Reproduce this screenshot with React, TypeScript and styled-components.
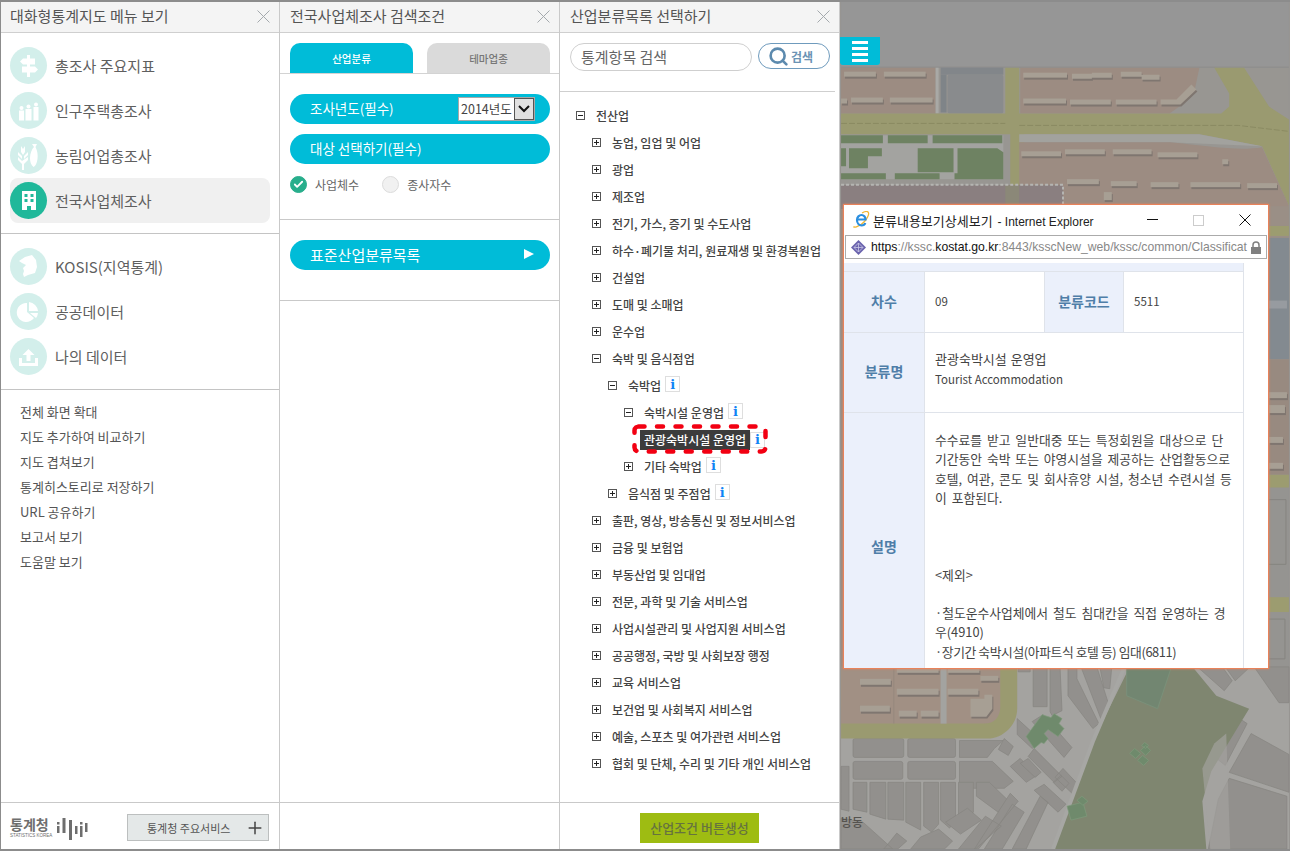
import React from 'react';
import styled, { createGlobalStyle } from 'styled-components';
import { Check, Plus, Search } from 'lucide-react';

const FONT = '"Noto Sans CJK KR", "Noto Sans", sans-serif';

const GlobalStyle = createGlobalStyle`
  html, body { margin: 0; padding: 0; background: #fff; }
  * { box-sizing: border-box; }
  body { font-family: ${FONT}; }
`;

const mainMenu = [
  { label: '총조사 주요지표', icon: 'sign' },
  { label: '인구주택총조사', icon: 'people' },
  { label: '농림어업총조사', icon: 'farm' },
  { label: '전국사업체조사', icon: 'building', active: true },
];
const dataMenu = [
  { label: 'KOSIS(지역통계)', icon: 'korea' },
  { label: '공공데이터', icon: 'pie' },
  { label: '나의 데이터', icon: 'upload' },
];
const linkMenu = ['전체 화면 확대', '지도 추가하여 비교하기', '지도 겹쳐보기', '통계히스토리로 저장하기', 'URL 공유하기', '보고서 보기', '도움말 보기'];

type TreeRow = { label: string; level: number; open?: boolean; info?: boolean; selected?: boolean; noToggle?: boolean };
const tree: TreeRow[] = [
  { label: '전산업', level: 0, open: true },
  { label: '농업, 임업 및 어업', level: 1 },
  { label: '광업', level: 1 },
  { label: '제조업', level: 1 },
  { label: '전기, 가스, 증기 및 수도사업', level: 1 },
  { label: '하수·폐기물 처리, 원료재생 및 환경복원업', level: 1 },
  { label: '건설업', level: 1 },
  { label: '도매 및 소매업', level: 1 },
  { label: '운수업', level: 1 },
  { label: '숙박 및 음식점업', level: 1, open: true },
  { label: '숙박업', level: 2, open: true, info: true },
  { label: '숙박시설 운영업', level: 3, open: true, info: true },
  { label: '관광숙박시설 운영업', level: 4, info: true, selected: true, noToggle: true },
  { label: '기타 숙박업', level: 3, info: true },
  { label: '음식점 및 주점업', level: 2, info: true },
  { label: '출판, 영상, 방송통신 및 정보서비스업', level: 1 },
  { label: '금융 및 보험업', level: 1 },
  { label: '부동산업 및 임대업', level: 1 },
  { label: '전문, 과학 및 기술 서비스업', level: 1 },
  { label: '사업시설관리 및 사업지원 서비스업', level: 1 },
  { label: '공공행정, 국방 및 사회보장 행정', level: 1 },
  { label: '교육 서비스업', level: 1 },
  { label: '보건업 및 사회복지 서비스업', level: 1 },
  { label: '예술, 스포츠 및 여가관련 서비스업', level: 1 },
  { label: '협회 및 단체, 수리 및 기타 개인 서비스업', level: 1 },
];

const MenuIcon = ({ name }: { name: string }) => {
  const c = '#fff';
  switch (name) {
    case 'sign':
      return (
        <svg width="37" height="37" viewBox="0 0 37 37" fill={c}>
          <rect x="17" y="8" width="3" height="22" />
          <path d="M13 11.500h12v6H13l-3-3z" />
          <path d="M12 19.500h13l3 3-3 3H12z" />
        </svg>
      );
    case 'people':
      return (
        <svg width="37" height="37" viewBox="0 0 37 37" fill={c}>
          <circle cx="11.500" cy="16" r="2" /><rect x="9" y="18.500" width="5" height="10" />
          <circle cx="18.500" cy="14.500" r="2" /><rect x="15.500" y="17" width="6" height="11.500" />
          <circle cx="26" cy="12.500" r="2" /><rect x="23.500" y="15" width="5" height="13.500" />
        </svg>
      );
    case 'farm':
      return (
        <svg width="37" height="37" viewBox="0 0 37 37" fill={c}>
          <path d="M11 9l2 3 2-3v6l-2 3-2-3zM8 15l4 4v3l-4-4zM18 15v3l-4 4v-3zM8 20l4 4v3l-4-4zM18 20v3l-4 4v6h-2v-9z" />
          <path d="M27 7l-1.500 3c2 4 2.500 8 2 12-.5 4-2 7-4 8-2.500-2-3.500-5-3.500-9 0-5 2-9 4-11l-2-3z" />
        </svg>
      );
    case 'building':
      return (
        <svg width="37" height="37" viewBox="0 0 37 37">
          <path fill={c} fillRule="evenodd" d="M12 9h14v19h-5v-4h-4v4h-5zM14.500 12v3h3v-3zM20.500 12v3h3v-3zM14.500 17v3h3v-3zM20.500 17v3h3v-3z" />
        </svg>
      );
    case 'korea':
      return (
        <svg width="37" height="37" viewBox="0 0 37 37">
          <path fill={c} d="M15 9l7-2 4 5 1 7-2 6-7 2-4 2-1-3 1-3-1-3 3-3-4-2-3-2 3-2z" />
        </svg>
      );
    case 'pie':
      return (
        <svg width="37" height="37" viewBox="0 0 37 37" fill={c}>
          <path d="M17 10v9l7 6a9.500 9.500 0 1 1-7-15z" />
          <path d="M19 9a10 10 0 0 1 9 9h-9z" />
          <path d="M20 20h8a10 10 0 0 1-2 5z" />
        </svg>
      );
    default:
      return (
        <svg width="37" height="37" viewBox="0 0 37 37" fill={c}>
          <path d="M18.500 11l6 6h-4v6h-4v-6h-4z" />
          <path d="M9 20h3v5h13v-5h3v8H9z" />
        </svg>
      );
  }
};

const CloseIcon = () => (
  <svg width="13" height="13" viewBox="0 0 13 13" fill="none" stroke="#a4a9ad" strokeWidth="1">
    <path d="M.5.500l12 12M12.500.500l-12 12" />
  </svg>
);

const Page = styled.div`
  position: relative;
  display: flex;
  width: 1290px;
  height: 851px;
  overflow: hidden;
  border-top: 2px solid #8c8c8c;
  border-left: 1px solid #8c8c8c;
  border-bottom: 2px solid #8c8c8c;
  background: #fff;
`;

const Header = styled.header`
  display: flex;
  flex: none;
  align-items: center;
  justify-content: space-between;
  height: 31px;
  padding: 0 9px 2px 10px;
  background: #f4f4f4;
  border-bottom: 1px solid #cfcfcf;
  color: #555;
  font-size: 15px;
  line-height: 20px;
`;

const Panel = styled.section`
  display: flex;
  flex-direction: column;
  flex: none;
  width: 280px;
  height: 100%;
  background: #fff;
  border-right: 1px solid #c9c9c9;
  &:first-child {
    width: 279px;
    ${Header} { padding-left: 9px; }
  }
`;

const Body = styled.div`
  flex: 1;
  min-height: 0;
  display: flex;
  flex-direction: column;
`;

const Footer = styled.footer`
  flex: none;
  display: flex;
  align-items: center;
  height: 47px;
  padding-top: 3px;
  border-top: 1px solid #c9c9c9;
`;

const MenuGroup = styled.nav`
  display: flex;
  flex-direction: column;
  gap: 8px;
  padding: 14px 0 14px 9px;
  border-bottom: 1px solid #c4c4c4;
`;

const MenuRow = styled.div<{ $active?: boolean }>`
  display: flex;
  align-items: center;
  gap: 8px;
  height: 37px;
  margin-right: 9px;
  color: #5f5f5f;
  font-size: 15px;
  border-radius: 8px;
  ${p => p.$active && `
    height: 45px;
    margin: -4px 9px -4px 0;
    background: #f0f0f0;
  `}
`;

const MenuCircle = styled.span<{ $active?: boolean }>`
  display: flex;
  width: 37px;
  height: 37px;
  flex: none;
  border-radius: 50%;
  background: ${p => (p.$active ? '#20b89a' : '#d3efeb')};
`;

const Links = styled.ul`
  list-style: none;
  margin: 0;
  padding: 9px 0 0 19px;
  li {
    height: 25px;
    line-height: 25px;
    font-size: 13px;
    color: #555;
  }
`;

const Logo = styled.div`
  display: flex;
  align-items: center;
  gap: 5px;
  width: 126px;
  padding-left: 9px;
`;

const LogoText = styled.div`
  display: flex;
  flex-direction: column;
  color: #6e6e6e;
  font-size: 14px;
  line-height: 15px;
  font-weight: 700;
  small {
    margin-top: 1px;
    font-size: 4.500px;
    line-height: 6px;
    font-weight: 400;
    white-space: nowrap;
    font-family: "Liberation Sans", sans-serif;
  }
`;

const ServiceButton = styled.div`
  display: flex;
  align-items: center;
  justify-content: space-between;
  width: 142px;
  height: 27px;
  padding: 0 3px 0 19px;
  background: #e4e8e8;
  border: 1px solid #bcbfbf;
  color: #555;
  font-size: 11px;
  svg { color: #444; }
`;

const Tabs = styled.div`
  display: flex;
  flex: none;
  gap: 14px;
  height: 41px;
  padding: 10px 9px 0 10px;
  border-bottom: 1px solid #d3d3d3;
`;

const Tab = styled.div<{ $active?: boolean }>`
  display: flex;
  flex: 1;
  align-items: center;
  justify-content: center;
  border-radius: 10px 10px 0 0;
  background: ${p => (p.$active ? '#00bcd8' : '#dadada')};
  color: ${p => (p.$active ? '#fff' : '#777')};
  font-size: 10.5px;
  font-weight: 500;
`;

const Section = styled.div<{ $height: number }>`
  display: flex;
  flex: none;
  flex-direction: column;
  height: ${p => p.$height}px;
  padding: 20px 9px 0 10px;
  gap: 10px;
  border-bottom: 1px solid #c9c9c9;
`;

const Pill = styled.div<{ $large?: boolean }>`
  display: flex;
  flex: none;
  align-items: center;
  justify-content: space-between;
  height: 30px;
  padding: 0 15px 2px 20px;
  border-radius: 15px;
  background: #00bcd8;
  color: #fff;
  font-size: ${p => (p.$large ? 15 : 13.5)}px;
`;

const YearSelect = styled.span`
  display: flex;
  align-items: stretch;
  justify-content: space-between;
  width: 77px;
  height: 24px;
  margin-top: 2px;
  padding-left: 2px;
  background: #fff;
  border: 1px solid #a8a8a8;
  color: #444;
  font-size: 12.5px;
  line-height: 21px;
  white-space: nowrap;
`;

const SelectArrow = styled.span`
  display: flex;
  width: 20px;
  align-items: center;
  justify-content: center;
  flex: none;
  background: #e1e1e1;
  border: 1px solid #555;
`;

const RadioRow = styled.div`
  display: flex;
  align-items: center;
  gap: 23px;
  margin-top: 2px;
`;

const Radio = styled.label`
  display: flex;
  align-items: center;
  gap: 8px;
  color: #666;
  font-size: 12px;
`;

const RadioMark = styled.span<{ $on?: boolean }>`
  display: flex;
  align-items: center;
  justify-content: center;
  width: 17px;
  height: 17px;
  border-radius: 50%;
  background: ${p => (p.$on ? '#28ae8c' : '#f1f1f1')};
  border: 1px solid ${p => (p.$on ? '#28ae8c' : '#dcdcdc')};
  color: #fff;
`;

const SearchRow = styled.div`
  display: flex;
  flex: none;
  gap: 6px;
  height: 59px;
  margin-right: 4px;
  padding: 10px 5px 0 10px;
  border-bottom: 1px solid #cfcfcf;
`;

const SearchInput = styled.div`
  width: 182px;
  height: 28px;
  padding-left: 10px;
  border: 1px solid #cfcfcf;
  border-radius: 14px;
  color: #666;
  font-size: 15px;
  line-height: 26px;
`;

const SearchButton = styled.div`
  display: flex;
  align-items: center;
  justify-content: center;
  gap: 2px;
  width: 72px;
  height: 26px;
  padding-right: 7px;
  border: 1px solid #6f9bbd;
  border-radius: 13px;
  color: #6b93b4;
  font-size: 12px;
  font-weight: 700;
`;

const Tree = styled.div`
  flex: 1;
  padding: 10px 0 0 16px;
`;

const Row = styled.div<{ $level: number }>`
  display: flex;
  align-items: center;
  height: 27px;
  padding-left: ${p => p.$level * 16}px;
  color: #444;
  font-size: 12px;
  font-weight: 500;
  white-space: nowrap;
`;

const Toggle = styled.span`
  display: flex;
  flex: none;
  align-items: center;
  justify-content: center;
  width: 9px;
  height: 9px;
  margin-right: 11px;
  border: 1px solid #555;
  background: #fff;
  position: relative;
`;

const ToggleBar = styled.i<{ $vertical?: boolean }>`
  position: absolute;
  background: #222;
  ${p => (p.$vertical ? 'width:1px;height:5px;left:3px;top:1px;' : 'width:5px;height:1px;left:1px;top:3px;')}
`;

const InfoBadge = styled.span<{ $flush?: boolean }>`
  display: flex;
  flex: none;
  align-items: center;
  justify-content: center;
  width: 15px;
  height: 16px;
  margin: ${p => (p.$flush ? '0' : '-3px 0 0 4px')};
  border: 1px solid #dedede;
  background: #fff;
  color: #0f84f5;
  font-family: "DejaVu Serif", serif;
  font-size: 13px;
  font-weight: 700;
`;

const Selected = styled.span`
  position: relative;
  display: flex;
  align-items: center;
`;

const SelectedLabel = styled.span`
  height: 20px;
  padding: 0 4px;
  line-height: 20px;
  background: #3c3c3c;
  color: #fff;
  font-weight: 500;
`;

const Dashes = styled.svg`
  position: absolute;
  left: -8px;
  top: -6px;
  pointer-events: none;
`;

const ActionButton = styled.div`
  display: flex;
  align-items: center;
  justify-content: center;
  width: 119px;
  height: 30px;
  margin: 0 auto;
  background: #9ebc12;
  color: #66733f;
  font-size: 13px;
  font-weight: 500;
`;

const MapArea = styled.div`
  position: relative;
  flex: 1;
  min-width: 0;
  height: 100%;
  background: #979592;
`;

const MapSvg = styled.svg`
  display: block;
  width: 100%;
  height: 100%;
`;

const Hamburger = styled.div`
  position: absolute;
  left: 0;
  top: 35px;
  display: flex;
  flex-direction: column;
  align-items: center;
  justify-content: center;
  gap: 3px;
  width: 40px;
  height: 28px;
  background: #00bcd8;
  border-radius: 0 0 3px 3px;
  i { display: block; width: 16px; height: 3px; background: #fff; }
`;

const Popup = styled.div`
  position: absolute;
  left: 3px;
  top: 202px;
  display: flex;
  flex-direction: column;
  width: 426px;
  height: 465px;
  background: #fff;
  border: 1px solid #e9825a;
  box-shadow: 0 0 2px #e9825a;
`;

const TitleBar = styled.div`
  display: flex;
  flex: none;
  align-items: center;
  gap: 3px;
  height: 30px;
  padding-left: 8px;
  color: #222;
  font-size: 13px;
`;

const TitleText = styled.span`
  flex: 1;
  white-space: nowrap;
  span {
    margin-left: 2px;
    font-family: "Liberation Sans", sans-serif;
    font-size: 12px;
  }
`;

const WinButtons = styled.div`
  display: flex;
  align-items: center;
  gap: 35px;
  padding-right: 17px;
`;

const AddressBar = styled.div`
  display: flex;
  flex: none;
  align-items: center;
  gap: 4px;
  height: 24px;
  margin: 0 1px;
  padding: 0 4px;
  border: 1px solid #ababab;
  font-family: "Liberation Sans", sans-serif;
  font-size: 12.2px;
  color: #888;
  white-space: nowrap;
`;

const Url = styled.span`
  flex: 1;
  min-width: 0;
  b { font-weight: 400; color: #111; }
`;

const Sheet = styled.div`
  flex: 1;
  min-height: 0;
  width: 400px;
  margin-top: 4px;
  overflow: hidden;
  border-right: 1px solid #dfe3ea;
  color: #444;
  font-size: 11.5px;
`;

const Strip = styled.div`
  height: 9px;
  background: #ebf0fb;
  border-bottom: 1px solid #dfe3ea;
`;

const SheetRow = styled.div<{ $cols: string; $h: number }>`
  display: grid;
  grid-template-columns: ${p => p.$cols};
  height: ${p => p.$h}px;
  border-bottom: 1px solid #dfe3ea;
`;

const Th = styled.div`
  display: flex;
  align-items: center;
  justify-content: center;
  padding-bottom: 3px;
  background: #ebf0fb;
  border-right: 1px solid #dfe3ea;
  color: #4f7ea8;
  font-size: 14px;
  font-weight: 700;
`;

const Td = styled.div`
  display: flex;
  align-items: center;
  padding: 0 10px 2px;
  border-right: 1px solid #dfe3ea;
  &:last-child { border-right: 0; }
`;

const NameCell = styled.div`
  margin-bottom: 5px;
  line-height: 20px;
  font-size: 11.5px;
  strong {
    display: block;
    font-size: 13px;
    font-weight: 400;
    word-spacing: 1px;
  }
`;

const DescCell = styled.div`
  padding: 17px 10px 0;
  line-height: 19.4px;
  font-size: 12.8px;
  word-spacing: 2px;
  white-space: nowrap;
  p { margin: 0; }
`;

const TightLine = styled.span`
  letter-spacing: -.4px;
  word-spacing: 0;
`;

const Spacer = styled.div<{ $h: number }>`
  height: ${p => p.$h}px;
`;

const buildingStrips = (
  <>
    <rect x="843" y="70" width="32" height="5" /><rect x="883" y="70" width="42" height="5" />
    <rect x="1023" y="71" width="44" height="5" /><path d="M1072 72h20v-1h20v5h-20v1h-20z" /><path d="M1121 70h21v3h18v5h-18v-3h-21z" />
    <rect x="840" y="97" width="6" height="5" /><rect x="850" y="96" width="32" height="5" /><rect x="889" y="96" width="43" height="5" />
    <rect x="1023" y="97" width="43" height="5" /><rect x="1070" y="98" width="41" height="5" /><rect x="1116" y="98" width="41" height="5" />
    <path d="M1161 98h16l15-15 5 5-16 15h-20z" />
    <rect x="1021" y="150" width="40" height="5" /><rect x="1065" y="148" width="40" height="5" /><rect x="1113" y="148" width="39" height="5" /><rect x="1158" y="151" width="40" height="5" />
    <rect x="1223" y="158" width="6" height="5" />
    <rect x="1067" y="178" width="32" height="5" /><rect x="1111" y="180" width="26" height="5" /><rect x="1151" y="181" width="28" height="5" /><rect x="1191" y="181" width="50" height="5" /><rect x="1248" y="182" width="30" height="5" />
    <rect x="1104" y="191" width="8" height="8" />
    <rect x="1270" y="392" width="18" height="6" /><rect x="1270" y="405" width="16" height="8" /><rect x="1270" y="437" width="14" height="6" /><rect x="1270" y="463" width="14" height="6" />
    <rect x="896" y="670" width="42" height="4" /><rect x="947" y="670" width="32" height="4" /><rect x="980" y="677" width="18" height="5" />
    <rect x="859" y="680" width="31" height="6" /><rect x="896" y="690" width="42" height="6" /><rect x="947" y="690" width="31" height="6" />
    <rect x="859" y="707" width="30" height="6" /><rect x="898" y="712" width="18" height="6" /><rect x="920" y="712" width="18" height="6" />
    <path d="M970 700h14v-4h8v14l-6 8h-16z" />
  </>
);

const CityMap = () => (
  <MapSvg viewBox="840 0 450 851">
    <rect x="840" y="0" width="450" height="851" fill="#989692" />
    <rect x="840" y="0" width="450" height="65" fill="#969696" />
    <rect x="840" y="65" width="450" height="1" fill="#8c8c8c" />

    {/* north blocks */}
    <rect x="840" y="66" width="95" height="46" fill="#9c8c82" />
    <rect x="935" y="66" width="3" height="46" fill="#a9a9a6" />
    <rect x="940" y="66" width="63" height="7" fill="#82868a" />
    <rect x="947" y="73" width="56" height="39" rx="2" fill="#898b8d" />
    <rect x="940" y="73" width="6" height="38" fill="#7f8488" />
    <path d="M1020 66h180l-5 24-15 15-10 7h-150z" fill="#9c8c82" />

    {/* yellow roads */}
    <path d="M1005 66h14v46h203l8-7V92l-15-26h30l25 39 20 13v87l-27-60-63-12h-176v71h-14v-71H840v-21h165z" fill="#9a9a70" />
    <path d="M1019 133h181l63 12-93-4h-151z" fill="#a2a29e" />
    <path d="M1019 141h151c40 4 70 9 93 5l27 59v3h-271z" fill="#9c8c82" />
    <path d="M840 122h165M1019 124h220l51 6" fill="none" stroke="#8a8a62" strokeWidth="1" strokeDasharray="6 2" />

    {/* garden */}
    <rect x="840" y="134" width="163" height="44" fill="#a3a3a0" />
    <path d="M840 134h42v8h-42zM887 134h40v8h-40zM932 134h70v8h-70zM848 147h33v8h-14v12h-19zM840 147h5v18h-5zM917 147h36v24h-36zM957 147h40l6 4v21h-46zM840 172h45v6h-45zM894 172h45v6h-45zM954 172h49v6h-49z" fill="#6e8262" />

    {/* selected block */}
    <rect x="840" y="184" width="223" height="24" fill="#8a7f80" />
    <rect x="1005" y="184" width="14" height="24" fill="#8b8878" />
    <path d="M840 183.500h223v25" fill="none" stroke="#b5b5b2" strokeWidth="2" strokeDasharray="3 2" />
    <rect x="840" y="208" width="4" height="460" fill="#9c8c82" />

    {/* east of the popup */}
    <rect x="1269" y="205" width="21" height="32" fill="#9a8f86" />
    <rect x="1269" y="225" width="21" height="10" fill="#9c9c70" />
    <rect x="1269" y="237" width="21" height="122" fill="#838a90" />
    <rect x="1270" y="300" width="18" height="8" fill="#979ba0" />
    <rect x="1269" y="359" width="21" height="116" fill="#988a80" />
    <rect x="1269" y="475" width="21" height="13" fill="#9c9c70" />
    <rect x="1269" y="488" width="21" height="110" fill="#959491" />
    <path d="M1269 500h18v65h-18" fill="none" stroke="#858480" />
    <rect x="1269" y="598" width="21" height="15" fill="#9c9c70" />
    <rect x="1269" y="613" width="21" height="55" fill="#959491" />
    <path d="M1269 620h17v40h-17" fill="none" stroke="#858480" />

    {/* south quarter */}
    <rect x="840" y="668" width="450" height="183" fill="#a4a3a0" />
    <g fill="#92908d" stroke="#868480" strokeWidth="0.7">
      <rect x="852" y="740" width="51" height="19" rx="2" /><rect x="907" y="740" width="48" height="19" rx="2" />
      <path d="M959 742h44l-9 8-7 9h-28z" />
      <rect x="852" y="763" width="50" height="18" rx="2" /><rect x="907" y="763" width="48" height="18" rx="2" />
      <path d="M959 763h33l21 20-9 7h-45z" />
      <path d="M852 784h14v30l-14-3zM869 784h16v37l-16-5zM887 784h16v38l-16-1zM905 784h15v48l-15-8zM923 784h15v42l-7 8-8-6zM940 784h15v38l-6 8-9-8zM958 784h15v30l-15 10zM976 784h13l27 26-10 10-30-22z" />
      <path d="M840 768h8v45l-8-2zM840 820l22 4 30 27h-52zM896 835l10 8-9 8h-14zM910 851l10-12 18-8 14 12-8 8zM960 836l-15-12 22-14 14 12zM985 818l16 10-26 23h-17zM1010 795l8 8-40 48h-4zM1012 806l12 8-22 37h-18zM1026 784l-16-16 10-8 17 17z" />
      <path d="M1018 668h12v5h-12zM1033 668h14v40h-14zM1050 668h10l2 44-10 5-2-4zM1068 668h9v12l22 45-6 5-25-33zM1081 668h16l12 38-8 14zM1100 668h12l-2 22-6-1zM1017 720l24 22-9 8-15-14zM1043 716l29 33-8 10-32-36z" />
      <path d="M1004 740l9 8-5 9-10-6zM1028 760l13 14-6 5-15-14zM1034 750l28 28-8 6-26-26zM1063 770l16 17-7 8-17-16zM1044 786l22 20-8 8-24-22zM1053 784l8-7 8 8-7 8zM1040 798l8 6-22 47h-14z" />
      <path d="M1198 668h25l10 14-8 10zM1226 668h25l-15 14zM1255 668h35v36l-10 0zM1215 707l18 8 15 10-22 42-20-16zM1252 735l38 21v38l-60-20zM1230 780l58 18v53h-79l10-50z" />
    </g>

    {/* big park */}
    <path d="M1130 668h63l24 29 33 13-20 33-18 30-9 30 4 48h-154l40-108z" fill="#7f8670" />
    <path d="M1127 668h45l-14 42-31-13z" fill="#728671" stroke="#7a907a" strokeWidth="1" />
    <path d="M1125 668l-32 75-40 108" fill="none" stroke="#a7a7a4" strokeWidth="4" />
    <g fill="#6f8a6c" stroke="#7f9a7c" strokeWidth="0.7">
      <path d="M1067 808l16-4 4 14-16 4z" /><path d="M1077 802l5-4 6 5-5 4z" />
      <path d="M1130 755l5-5 6 5-5 5zM1138 762l5-5 6 5-5 5zM1141 752l5-5 5 5-5 5zM1142 747l3-3 4 3-3 3z" />
      <path d="M1026 738l16-22 9 3 3-4 8 5-3 5 5 5-6 8-10-7-4 4 4 5-4 5-3-1-7 6z" />
    </g>
    <path d="M1203 770l12-25 12-10 4 116h-20z" fill="#a4a3a0" opacity=".65" />

    {/* the yellow road round the south block */}
    <path d="M840 668h177v42c0 16-14 30-30 30H840z" fill="#9a9a70" />
    <path d="M840 668h160v40c0 10-6 17-16 17H840z" fill="#a19084" />
    <path d="M940 668h6v57h-6z" fill="#a3a3a0" />
    <path d="M893 668v57" stroke="#95877d" strokeWidth="1" />

    {/* shadows then roofs */}
    <g transform="translate(1 2)" fill="#7f7670">{buildingStrips}</g>
    <g fill="#a79f94">{buildingStrips}</g>

    <text x="840" y="829" fontSize="12" fontWeight="500" fill="#55534f" fontFamily={FONT}>방동</text>
  </MapSvg>
);

const TreeItem = ({ row }: { row: TreeRow }) => (
  <Row $level={row.level}>
    {!row.noToggle && (
      <Toggle>
        <ToggleBar />
        {!row.open && <ToggleBar $vertical />}
      </Toggle>
    )}
    {row.selected ? (
      <Selected>
        <Dashes width="136" height="32" viewBox="0 0 136 32">
          <rect x="2.500" y="2.500" width="131" height="25" rx="4" fill="none" stroke="#f20012" strokeWidth="4.500" strokeLinecap="round" strokeDasharray="6 12.500" />
        </Dashes>
        <SelectedLabel>{row.label}</SelectedLabel>
        <InfoBadge $flush>i</InfoBadge>
      </Selected>
    ) : (
      <>
        {row.label}
        {row.info && <InfoBadge>i</InfoBadge>}
      </>
    )}
  </Row>
);

const App = () => (
  <>
    <GlobalStyle />
    <Page>
      <Panel>
        <Header>대화형통계지도 메뉴 보기<CloseIcon /></Header>
        <Body>
          <MenuGroup>
            {mainMenu.map(item => (
              <MenuRow key={item.label} $active={item.active}>
                <MenuCircle $active={item.active}>
                  <MenuIcon name={item.icon} />
                </MenuCircle>
                {item.label}
              </MenuRow>
            ))}
          </MenuGroup>
          <MenuGroup>
            {dataMenu.map(item => (
              <MenuRow key={item.label}>
                <MenuCircle>
                  <MenuIcon name={item.icon} />
                </MenuCircle>
                {item.label}
              </MenuRow>
            ))}
          </MenuGroup>
          <Links>
            {linkMenu.map(l => <li key={l}>{l}</li>)}
          </Links>
        </Body>
        <Footer>
          <Logo>
            <LogoText>통계청<small>STATISTICS KOREA</small></LogoText>
            <svg width="31" height="25" viewBox="0 0 31 25" fill="#6e6e6e">
              <rect x="0" y="7" width="2.500" height="2.500" /><rect x="0" y="11" width="2.500" height="7" />
              <rect x="5.500" y="3" width="3" height="15" />
              <rect x="12" y="5" width="3" height="20" />
              <rect x="18" y="11" width="2.500" height="8" />
              <rect x="23" y="7" width="2.500" height="2.500" /><rect x="23" y="11" width="2.500" height="11" />
              <rect x="28" y="8" width="2.500" height="9" />
            </svg>
          </Logo>
          <ServiceButton>통계청 주요서비스<Plus size={20} strokeWidth={1.8} /></ServiceButton>
        </Footer>
      </Panel>

      <Panel>
        <Header>전국사업체조사 검색조건<CloseIcon /></Header>
        <Body>
          <Tabs>
            <Tab $active>산업분류</Tab>
            <Tab>테마업종</Tab>
          </Tabs>
          <Section $height={146}>
            <Pill>
              조사년도(필수)
              <YearSelect>
                2014년도
                <SelectArrow>
                  <svg width="12" height="8" viewBox="0 0 12 8"><path d="M1 1l5 5 5-5" fill="none" stroke="#111" strokeWidth="2" /></svg>
                </SelectArrow>
              </YearSelect>
            </Pill>
            <Pill>대상 선택하기(필수)</Pill>
            <RadioRow>
              <Radio><RadioMark $on><Check size={11} strokeWidth={4} /></RadioMark>사업체수</Radio>
              <Radio><RadioMark />종사자수</Radio>
            </RadioRow>
          </Section>
          <Section $height={81}>
            <Pill $large>
              표준산업분류목록
              <svg width="12" height="12" viewBox="0 0 12 12"><path d="M1 1l10 5-10 5z" fill="#fff" /></svg>
            </Pill>
          </Section>
        </Body>
        <Footer />
      </Panel>

      <Panel>
        <Header>산업분류목록 선택하기<CloseIcon /></Header>
        <Body>
          <SearchRow>
            <SearchInput>통계항목 검색</SearchInput>
            <SearchButton><Search size={21} strokeWidth={3} color="#5c8aae" />검색</SearchButton>
          </SearchRow>
          <Tree>
            {tree.map(row => <TreeItem key={row.label} row={row} />)}
          </Tree>
        </Body>
        <Footer><ActionButton>산업조건 버튼생성</ActionButton></Footer>
      </Panel>

      <MapArea>
        <CityMap />
        <Hamburger><i /><i /><i /><i /></Hamburger>
        <Popup>
          <TitleBar>
            <svg width="18" height="18" viewBox="0 0 18 18">
              <path d="M2.500 15.500c-3 1.500 5 1 10-5 4-5 5-8 3.500-9.500-1-1-3.500-.3-6 1" fill="none" stroke="#f2b632" strokeWidth="1.300" />
              <path d="M5.500 8.500h8c0-2.500-1.800-4.500-4-4.500S5 6 5 9s2 5.500 4.500 5.500c1.800 0 3.300-1 3.800-2.500" fill="none" stroke="#2b8fe0" strokeWidth="2.200" />
            </svg>
            <TitleText>분류내용보기상세보기 <span>- Internet Explorer</span></TitleText>
            <WinButtons>
              <svg width="11" height="2" viewBox="0 0 11 2"><rect width="11" height="1" fill="#111" /></svg>
              <svg width="11" height="11" viewBox="0 0 11 11"><rect x=".5" y=".5" width="10" height="10" fill="none" stroke="#ccc" /></svg>
              <svg width="12" height="12" viewBox="0 0 12 12"><path d="M.5.500l11 11M11.500.500l-11 11" fill="none" stroke="#111" /></svg>
            </WinButtons>
          </TitleBar>
          <AddressBar>
            <svg width="17" height="17" viewBox="0 0 17 17">
              <path d="M8.500 1l7.500 7.500-7.500 7.500L1 8.500z" fill="#6a63ad" />
              <path d="M8.500 4l4.500 4.500-4.500 4.500L4 8.500z M4 8.500h9M8.500 4v9" fill="none" stroke="#c9c6e6" strokeWidth=".8" />
            </svg>
            <Url><b>https</b>://kssc.<b>kostat.go.kr</b>:8443/ksscNew_web/kssc/common/Classificat</Url>
            <svg width="12" height="13" viewBox="0 0 12 13">
              <path d="M3 6V4a3 3 0 0 1 6 0v2" fill="none" stroke="#808080" strokeWidth="1.500" />
              <rect x="1" y="6" width="10" height="7" fill="#808080" />
            </svg>
          </AddressBar>
          <Sheet>
            <Strip />
            <SheetRow $cols="81px 120px 79px 1fr" $h={61}>
              <Th>차수</Th><Td>09</Td><Th>분류코드</Th><Td>5511</Td>
            </SheetRow>
            <SheetRow $cols="81px 1fr" $h={80}>
              <Th>분류명</Th>
              <Td><NameCell><strong>관광숙박시설 운영업</strong>Tourist Accommodation</NameCell></Td>
            </SheetRow>
            <SheetRow $cols="81px 1fr" $h={270}>
              <Th>설명</Th>
              <DescCell>
                <p>수수료를 받고 일반대중 또는 특정회원을 대상으로 단<br />기간동안 숙박 또는 야영시설을 제공하는 산업활동으로<br />호텔, 여관, 콘도 및 회사휴양 시설, 청소년 수련시설 등<br />이 포함된다.</p>
                <Spacer $h={57} />
                <p>&lt;제외&gt;</p>
                <Spacer $h={19} />
                <p>·철도운수사업체에서 철도 침대칸을 직접 운영하는 경<br />우(4910)<br /><TightLine>·장기간 숙박시설(아파트식 호텔 등) 임대(6811)</TightLine></p>
              </DescCell>
            </SheetRow>
          </Sheet>
        </Popup>
      </MapArea>
    </Page>
  </>
);

export default App;
